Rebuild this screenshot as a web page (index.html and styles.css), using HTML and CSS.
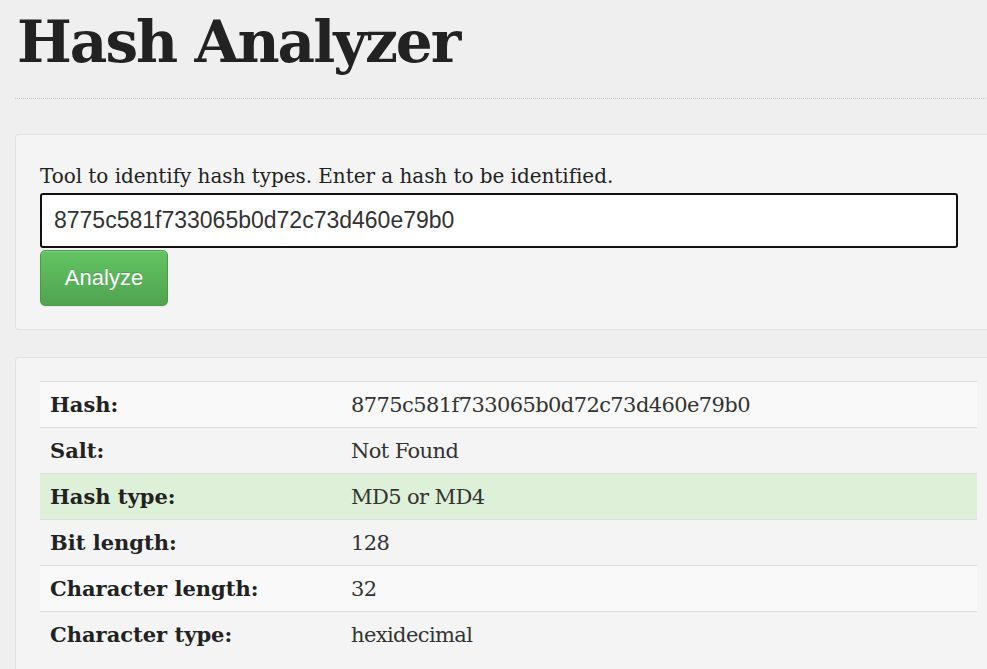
FILE: index.html
```html
<!DOCTYPE html>
<html lang="en">
<head>
<meta charset="utf-8">
<title>Hash Analyzer</title>
<link rel="stylesheet" href="styles.css">
</head>
<body>
<div class="page">
  <h1 class="title">Hash Analyzer</h1>
  <div class="panel panel-form">
    <p class="lead">Tool to identify hash types. Enter a hash to be identified.</p>
    <input class="hash-input" type="text" value="8775c581f733065b0d72c73d460e79b0">
    <div class="actions"><button class="btn-analyze" type="button">Analyze</button></div>
  </div>
  <div class="panel panel-result">
    <table class="result">
      <tr class="stripe"><th>Hash:</th><td>8775c581f733065b0d72c73d460e79b0</td></tr>
      <tr><th>Salt:</th><td>Not Found</td></tr>
      <tr class="success"><th>Hash type:</th><td>MD5 or MD4</td></tr>
      <tr><th>Bit length:</th><td>128</td></tr>
      <tr class="stripe"><th>Character length:</th><td>32</td></tr>
      <tr class="last"><th>Character type:</th><td>hexidecimal</td></tr>
    </table>
  </div>
</div>
</body>
</html>
```
FILE: styles.css
```css
html, body {
  margin: 0;
  padding: 0;
}
body {
  background: #efefef;
  overflow: hidden;
  font-family: "DejaVu Serif", "Liberation Serif", serif;
  color: #222;
}
.page {
  width: 975px;
  padding-left: 15px;
}
.title {
  margin: 0;
  padding: 0 0 14px 2px;
  font-size: 58px;
  line-height: 84px;
  font-weight: bold;
  color: #222;
  letter-spacing: -2px;
  border-bottom: 1px dotted #c4c4c4;
}
.panel {
  background: #f4f4f4;
  border: 1px solid #e2e2e2;
  border-right: none;
  border-radius: 4px 0 0 4px;
}
.panel-form {
  margin-top: 35px;
  padding: 26px 0 23px 24px;
}
.lead {
  margin: 0;
  font-size: 20px;
  line-height: 30px;
  color: #222;
  letter-spacing: -0.05px;
}
.hash-input {
  display: block;
  box-sizing: border-box;
  margin: 2px 0 0 0;
  width: 918px;
  height: 55px;
  padding: 0 12px;
  border: 2px solid #111;
  border-radius: 3px;
  background: #fff;
  font-family: "Liberation Sans", Arial, sans-serif;
  font-size: 23px;
  color: #333;
  outline: none;
}
.actions {
  margin-top: 2px;
}
.btn-analyze {
  box-sizing: border-box;
  width: 128px;
  height: 56px;
  padding: 0;
  border: 1px solid #4a9a4a;
  border-radius: 5px;
  background: linear-gradient(to bottom, #62c462, #51a351);
  color: #fff;
  font-family: "Liberation Sans", Arial, sans-serif;
  font-size: 22px;
  text-shadow: 0 -1px 0 rgba(0,0,0,0.15);
  box-shadow: inset 0 1px 0 rgba(255,255,255,0.2), 0 1px 2px rgba(0,0,0,0.05);
}
.panel-result {
  margin-top: 27px;
  padding: 23px 0 40px 24px;
}
.result {
  width: 937px;
  border-collapse: collapse;
  font-size: 21px;
  color: #222;
}
.result th,
.result td {
  height: 45px;
  padding: 0 10px;
  border-top: 1px solid #dcdcdc;
  text-align: left;
  vertical-align: middle;
}
.result th {
  width: 281px;
  font-weight: bold;
  letter-spacing: 0;
}
.result td {
  color: #333;
  letter-spacing: -0.6px;
}
.result tr.stripe {
  background: #f9f9f9;
}
.result tr.success {
  background: #dff0d8;
}
```
